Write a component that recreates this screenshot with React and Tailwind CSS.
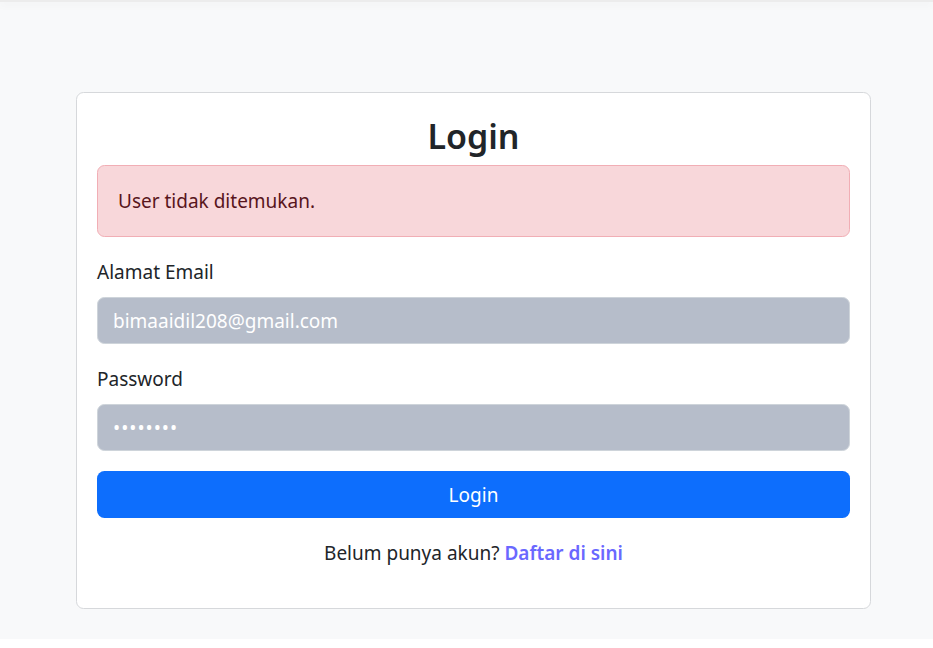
import React, { useState } from "react";

// Login page - zoomed bootstrap look (everything x1.25)
export default function App() {
  const [form, setForm] = useState({
    email: "bimaaidil208@gmail.com",
    password: "rahasia1"
  });
  const [error] = useState("User tidak ditemukan.");

  return (
    <div
      className="min-h-[648px] bg-white text-[#212529] text-[20px]"
      style={{ fontFamily: "'Noto Sans', 'Open Sans', sans-serif" }}
    >
      {/* navbar shadow edge */}
      <div className="h-[2px] bg-[#ececec] shadow-[0_2px_8px_rgba(0,0,0,0.08)] relative" />

      <div className="bg-[#f8f9fa] pt-[90px] pb-[30px]">
        <form
          className="ml-[76px] w-[795px] bg-white border border-[#d6d8db] rounded-[7.5px] p-[20px]"
          onSubmit={e => e.preventDefault()}
        >
          <h2 className="text-center text-[34px] font-semibold leading-[46px] mb-[6px]">
            Login
          </h2>

          {error && (
            <div className="bg-[#f8d7da] border border-[#f1aeb5] text-[#58151c] rounded-[7.5px] px-[20px] py-[20px] leading-[30px] mb-[20px] text-[19px]">
              {error}
            </div>
          )}

          <label className="block leading-[30px] mb-[10px] text-[19px]">
            Alamat Email
          </label>
          <input
            type="email"
            value={form.email}
            onChange={e => setForm(f => ({ ...f, email: e.target.value }))}
            className="block w-full h-[47px] px-[15px] rounded-[7.5px] border border-[#ced4da] bg-[#b6bdca] text-white text-[19px] outline-none mb-[20px]"
          />

          <label className="block leading-[30px] mb-[10px] text-[19px]">
            Password
          </label>
          <input
            type="password"
            value={form.password}
            onChange={e => setForm(f => ({ ...f, password: e.target.value }))}
            className="block w-full h-[47px] px-[15px] rounded-[7.5px] border border-[#ced4da] bg-[#b6bdca] text-white text-[19px] tracking-[1px] outline-none mb-[20px]"
          />

          <button
            type="submit"
            className="block w-full h-[47px] rounded-[7.5px] bg-[#0d6efd] text-white text-[19px] leading-[30px]"
          >
            Login
          </button>

          <p className="text-center leading-[30px] mt-[20px] mb-[20px] text-[19px]">
            Belum punya akun?{" "}
            <a href="#" className="text-[#6a68ff] font-semibold">
              Daftar di sini
            </a>
          </p>
        </form>
      </div>
    </div>
  );
}
